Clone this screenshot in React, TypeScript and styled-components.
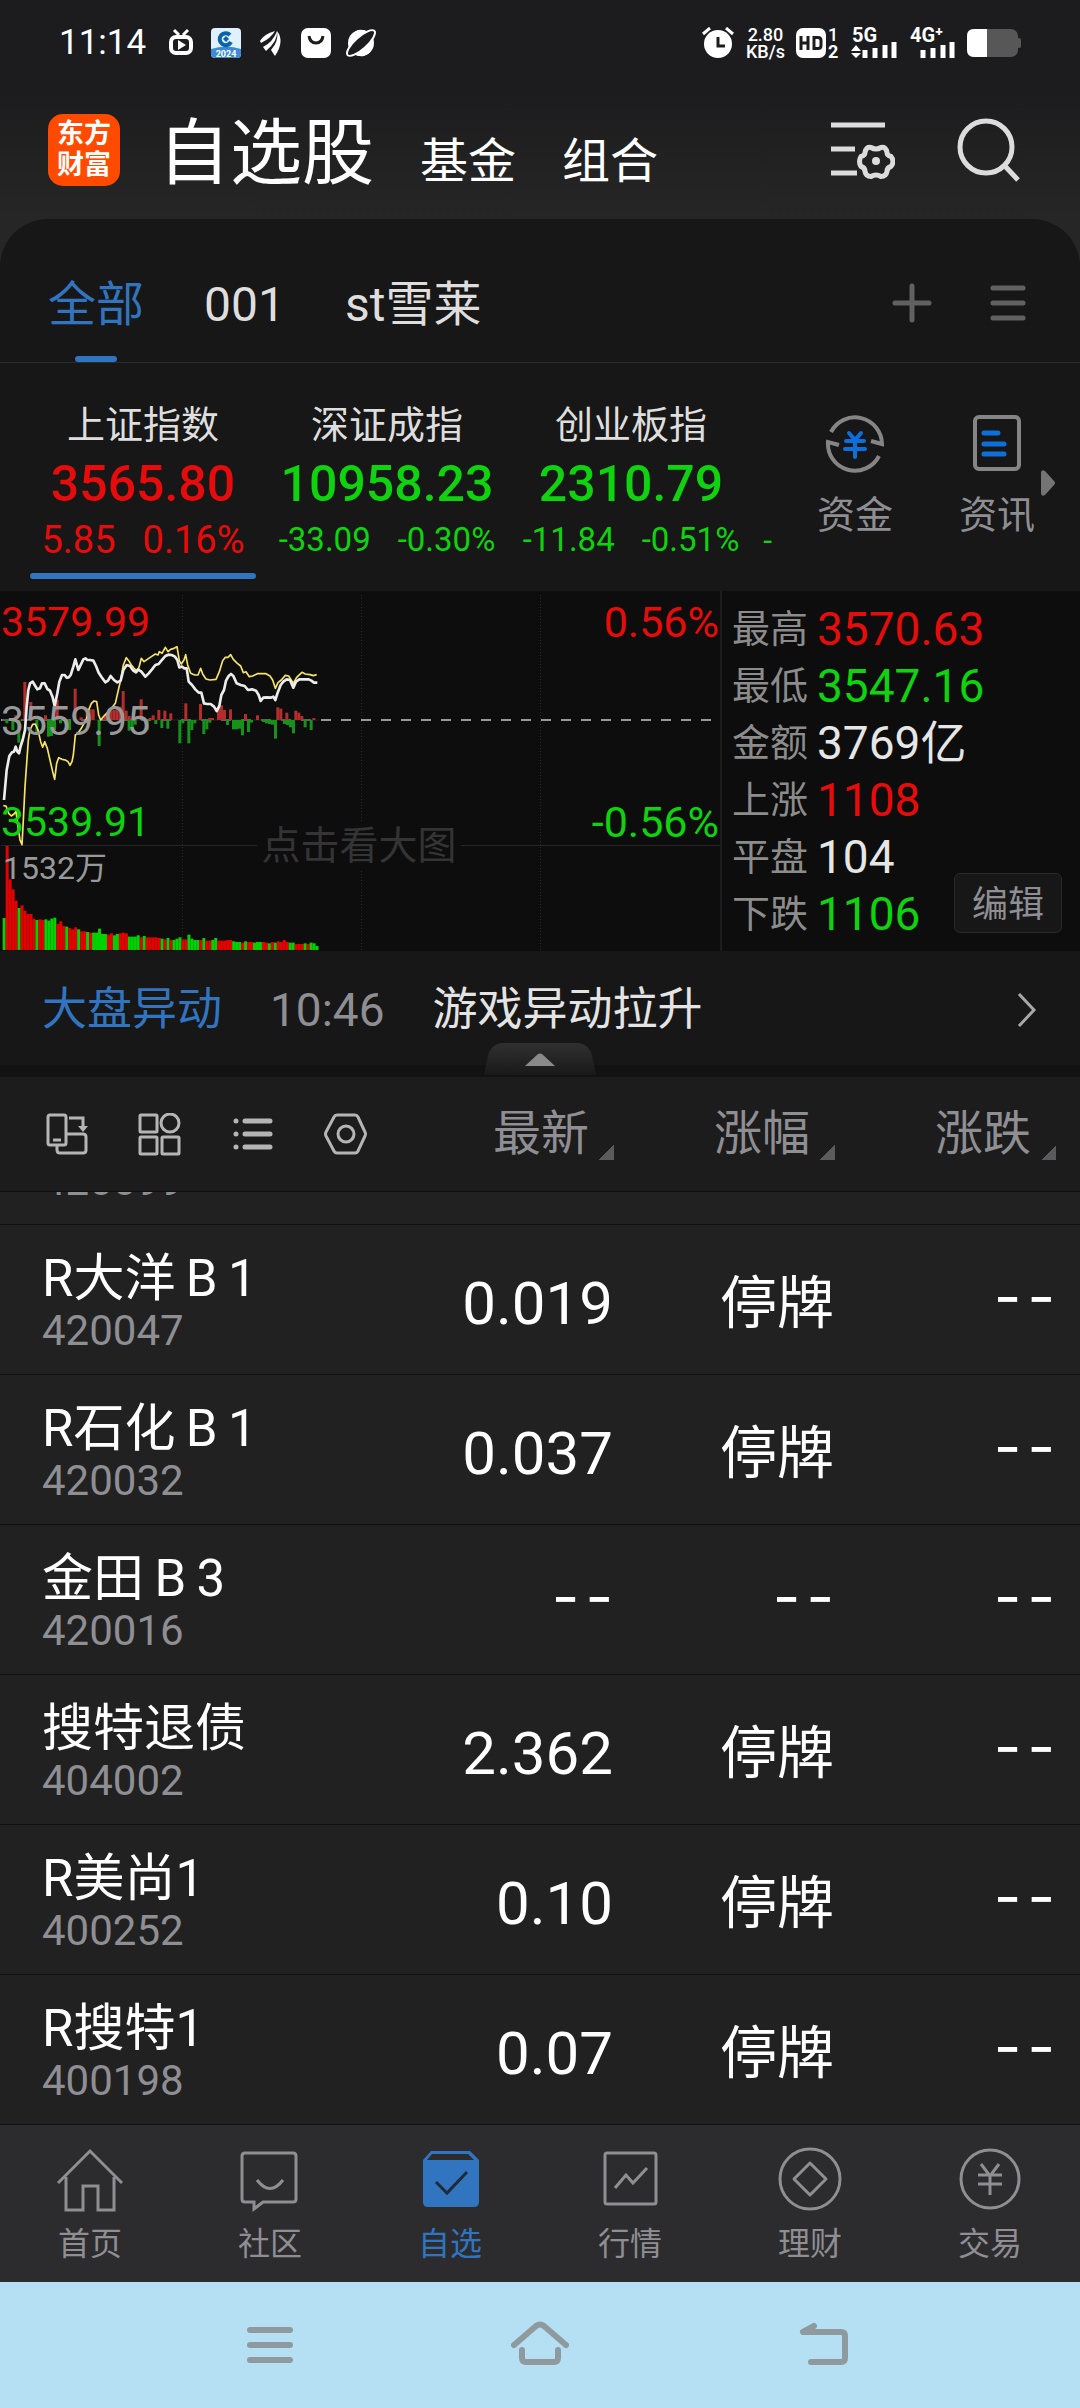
import React from "react";
import styled, { createGlobalStyle } from "styled-components";

const RED = "#e60c0c";
const GREEN = "#0fd30f";
const BLUE = "#3174c0";
const GREY = "#8e8e93";

type Tone = "up" | "down" | "flat";
const toneColor = (tone: Tone) => (tone === "up" ? RED : tone === "down" ? GREEN : "#e6e6e6");

const GlobalStyle = createGlobalStyle`
  * { box-sizing: border-box; }
  body {
    margin: 0;
    background: #212121;
    color: #fff;
    font-family: Roboto, "Noto Sans CJK SC", sans-serif;
    font-weight: 400;
  }
  button {
    margin: 0;
    padding: 0;
    border: 0;
    background: none;
    color: inherit;
    font: inherit;
    white-space: nowrap;
  }
  svg { display: block; flex: none; }
`;

const Screen = styled.div`
  width: 100%;
  overflow: hidden;
`;

/* ---------- status bar and header ---------- */

const Top = styled.header`
  padding-bottom: 48px;
  margin-bottom: -48px;
  background: linear-gradient(#1c1c1e 0, #1c1c1e 88px, #262626 219px);
`;

const StatusBar = styled.div`
  display: flex;
  align-items: center;
  justify-content: space-between;
  height: 86px;
  padding: 0 59px 0 59px;
`;

const StatusGroup = styled.div<{ $gap: number }>`
  display: flex;
  align-items: center;
  gap: ${(p) => p.$gap}px;
`;

const Clock = styled.time`
  width: 96px;
  font-size: 35px;
  line-height: 40px;
`;

const Speed = styled.div`
  font-size: 18px;
  line-height: 17px;
  text-align: center;
  font-weight: 500;
`;

const Header = styled.div`
  display: flex;
  align-items: center;
  height: 133px;
  padding: 0 59px 6px 48px;
`;

const Logo = styled.div`
  display: grid;
  place-content: center;
  width: 72px;
  height: 72px;
  border-radius: 15px;
  background: #ff4a00;
  font-size: 27px;
  line-height: 31px;
  font-weight: 700;
`;

const Sections = styled.nav`
  display: flex;
  align-items: baseline;
  flex: 1;
  gap: 46px;
  margin-left: 38px;
  padding-top: 16px;
`;

const Section = styled.button<{ $main?: boolean }>`
  font-size: ${(p) => (p.$main ? 72 : 48)}px;
  line-height: 84px;
`;

const HeaderActions = styled.div`
  display: flex;
  align-items: center;
  gap: 62px;
`;

/* ---------- market panel ---------- */

const Panel = styled.section`
  border-radius: 48px 48px 0 0;
  background: #171717;
`;

const Groups = styled.div`
  display: flex;
  align-items: stretch;
  height: 144px;
  padding: 0 54px 0 48px;
  border-bottom: 1px solid #2b2b2b;
`;

const GroupTabs = styled.div`
  display: flex;
  flex: 1;
  gap: 60px;
`;

const GroupTab = styled.button<{ $active?: boolean }>`
  position: relative;
  padding-top: 28px;
  color: ${(p) => (p.$active ? BLUE : "#dedede")};
  font-size: 48px;
  line-height: 56px;

  &::after {
    content: "";
    display: ${(p) => (p.$active ? "block" : "none")};
    position: absolute;
    bottom: 0;
    left: 50%;
    width: 42px;
    height: 6px;
    margin-left: -21px;
    border-radius: 3px;
    background: ${BLUE};
  }
`;

const GroupActions = styled.div`
  display: flex;
  align-items: center;
  gap: 58px;
  padding-top: 24px;
`;

const Indices = styled.div`
  display: flex;
  height: 228px;
`;

const IndexStrip = styled.div`
  display: flex;
  flex: 1;
  padding-left: 21px;
  overflow: hidden;
`;

const IndexCard = styled.button<{ $active?: boolean }>`
  display: flex;
  flex-direction: column;
  align-items: center;
  flex: none;
  width: 244px;
  padding-top: 36px;

  &::after {
    content: "";
    width: 226px;
    height: 6px;
    margin-top: 10px;
    border-radius: 3px;
    background: ${(p) => (p.$active ? BLUE : "transparent")};
  }
`;

const IndexName = styled.span`
  color: #dedede;
  font-size: 38px;
  line-height: 52px;
`;

const IndexValue = styled.strong<{ $tone: Tone }>`
  color: ${(p) => toneColor(p.$tone)};
  font-size: 50px;
  line-height: 66px;
  font-weight: 500;
`;

const IndexChange = styled.span<{ $tone: Tone; $large?: boolean }>`
  display: flex;
  align-items: baseline;
  gap: 27px;
  height: 46px;
  color: ${(p) => toneColor(p.$tone)};
  font-size: ${(p) => (p.$large ? 38 : 33)}px;
  line-height: 46px;
`;

const NextIndex = styled.span`
  align-self: flex-start;
  width: 21px;
  padding-top: 154px;
  color: ${GREEN};
  font-size: 32px;
  line-height: 46px;
  text-align: right;
`;

const Shortcuts = styled.div`
  display: flex;
  gap: 66px;
  padding: 50px 0 0 45px;
`;

const Shortcut = styled.button`
  display: flex;
  flex-direction: column;
  align-items: center;
  align-self: flex-start;
  gap: 20px;
  color: ${GREY};
  font-size: 38px;
  line-height: 44px;
`;

const ShortcutMore = styled.div`
  display: flex;
  align-items: center;
  width: 45px;
  padding: 12px 0 0 5px;
`;

/* ---------- chart ---------- */

const ChartArea = styled.div`
  display: grid;
  grid-template-columns: 2fr 1fr;
  background: #0d0d0d;
`;

const Chart = styled.svg`
  width: 100%;
  height: auto;
`;

const Stats = styled.dl`
  position: relative;
  display: flex;
  flex-direction: column;
  margin: 0;
  padding: 9px 0 9px 10px;
  border-left: 2px solid #1c1c1c;
`;

const Stat = styled.div`
  display: flex;
  align-items: center;
  gap: 9px;
  height: 57px;
`;

const StatLabel = styled.dt`
  color: #8c8c8c;
  font-size: 38px;
  line-height: 56px;
`;

const StatValue = styled.dd<{ $tone: Tone }>`
  margin: 0;
  color: ${(p) => toneColor(p.$tone)};
  font-size: 46px;
  line-height: 56px;
`;

const EditButton = styled.button`
  position: absolute;
  right: 18px;
  bottom: 18px;
  width: 108px;
  height: 60px;
  padding-top: 4px;
  border: 1px solid #2a2a2a;
  border-radius: 6px;
  background: #171717;
  color: ${GREY};
  font-size: 36px;
  line-height: 54px;
`;

/* ---------- news ---------- */

const News = styled.a`
  position: relative;
  display: flex;
  align-items: center;
  height: 126px;
  padding: 3px 43px 0 42px;
  border-bottom: 12px solid #121212;
  color: #e4e4e4;
  font-size: 45px;
  line-height: 56px;
  text-decoration: none;
`;

const NewsTag = styled.span`
  color: ${BLUE};
`;

const NewsTime = styled.time`
  margin: 0 48px;
  color: ${GREY};
  font-size: 46px;
`;

const NewsTitle = styled.span`
  flex: 1;
`;

const Handle = styled.span`
  position: absolute;
  left: 50%;
  bottom: -10px;
  margin-left: -56px;
`;

/* ---------- table ---------- */

const Table = styled.table`
  width: 100%;
  border-spacing: 0;
  table-layout: fixed;
  background: #212121;
`;

const Head = styled.th<{ $wide?: boolean }>`
  width: ${(p) => (p.$wide ? "auto" : "221px")};
  height: 115px;
  padding: 0;
  border-bottom: 1px solid #0e0e0e;
  background: #1c1c1c;
  font-weight: 400;
`;

const Tools = styled.div`
  display: flex;
  align-items: center;
  gap: 49px;
  padding-left: 45px;
`;

const HeadValue = styled.div`
  display: flex;
  padding-right: 24px;
`;

const SortButton = styled.button`
  display: flex;
  align-items: flex-end;
  gap: 10px;
  margin-left: auto;
  color: ${GREY};
  font-size: 48px;
  line-height: 56px;
`;

const SortMark = styled.span`
  width: 15px;
  height: 15px;
  margin-bottom: 2px;
  background: linear-gradient(135deg, transparent 50%, #5b5b5d 50%);
`;

const Cell = styled.td`
  padding: 0;
  border-bottom: 1px solid #0f0f0f;
  text-align: right;
`;

const ClippedRow = styled.div`
  display: flex;
  align-items: flex-end;
  height: 32px;
  overflow: hidden;
`;

const Stock = styled.div`
  display: flex;
  flex-direction: column;
  justify-content: flex-end;
  height: 149px;
  padding: 0 0 18px 42px;
  text-align: left;
`;

const StockName = styled.span`
  font-size: 51px;
  line-height: 54px;
`;

const StockCode = styled.span`
  color: ${GREY};
  font-size: 42px;
  line-height: 50px;
`;

const Value = styled.div`
  display: flex;
  align-items: center;
  justify-content: flex-end;
  height: 149px;
  padding: 8px 25px 0 0;
`;

const Price = styled.span`
  font-size: 60px;
  line-height: 72px;
`;

const Halted = styled.span`
  font-size: 57px;
  line-height: 72px;
`;

const Dashes = styled.span`
  display: flex;
  gap: 6px;
  padding-bottom: 16px;
  font-family: Inter, Roboto, sans-serif;
  font-size: 60px;
  line-height: 72px;
`;

/* ---------- bottom bars ---------- */

const TabBar = styled.nav`
  display: grid;
  grid-template-columns: repeat(6, 1fr);
  height: 157px;
  background: #2c2c2e;
`;

const TabItem = styled.button<{ $active?: boolean }>`
  display: flex;
  flex-direction: column;
  align-items: center;
  gap: 11px;
  padding-top: 20px;
  color: ${(p) => (p.$active ? BLUE : GREY)};
  font-size: 32px;
  line-height: 40px;
`;

const SystemBar = styled.nav`
  display: grid;
  grid-template-columns: repeat(3, 1fr);
  height: 126px;
  padding: 0 12.5%;
  background: #b5dff3;
  color: #8f9a9f;
`;

const SystemButton = styled.button`
  display: grid;
  place-items: center;
`;

/* ---------- chart data ---------- */

const PRICE_LINE =
  "12,480 20,390 28,348 36,337 42,335 47,320 52,335 57,340 62,318 68,300 75,270 80,200 85,150 90,130 98,125 104,135 112,148 120,145 126,130 134,130 142,147 150,152 158,172 164,198 172,160 178,125 186,105 194,105 200,113 206,112 212,105 220,80 226,58 235,90 242,75 250,58 256,55 262,60 270,60 280,62 288,78 296,98 305,112 316,127 324,122 332,108 342,120 352,127 362,122 370,90 380,75 390,78 400,92 408,97 414,88 424,95 436,110 446,100 456,88 466,75 476,72 484,62 490,55 496,48 505,44 515,45 525,50 532,60 538,82 546,80 553,85 560,85 566,125 576,135 586,148 596,158 604,158 612,190 622,192 632,192 642,200 650,213 658,198 664,165 672,150 678,122 686,108 693,102 700,108 710,130 722,135 734,138 744,150 756,148 768,152 776,165 782,183 790,173 800,172 812,173 820,170 826,180 833,158 842,135 850,125 860,118 870,120 880,143 888,125 898,118 912,118 926,118 934,122 942,128 952,128";

const AVERAGE_LINE =
  "10,497 18,498 26,520 34,528 42,522 48,515 54,560 60,600 66,614 70,540 75,440 80,370 85,300 90,270 98,253 106,252 114,270 122,305 128,322 134,305 142,325 150,360 158,395 164,418 170,370 176,353 186,358 196,360 204,365 210,376 216,365 220,345 226,285 234,280 244,265 252,250 260,235 266,210 274,190 282,183 290,185 296,225 302,240 312,228 322,218 330,210 338,200 346,190 354,155 362,120 370,75 379,53 386,62 394,75 402,85 412,95 418,78 424,55 432,65 442,58 454,50 466,42 474,45 478,35 486,40 496,22 504,35 512,28 522,25 531,20 538,62 544,72 552,60 557,44 563,75 572,100 584,105 594,105 602,85 608,102 618,117 630,120 648,118 658,95 668,62 676,52 684,52 692,44 700,58 712,70 722,78 730,98 738,95 748,110 758,108 772,101 798,101 810,108 818,120 826,145 834,128 844,120 856,106 866,108 880,130 890,112 906,97 916,102 930,104 940,107 950,104";

const MOMENTUM_UP: [number, number][] = [
  [48, 14], [75, 114], [93, 54], [137, 14], [172, 60], [226, 94], [244, 8], [262, 32], [271, 32], [280, 32], [316, 16],
  [325, 14], [334, 28], [343, 30], [352, 36], [361, 40], [370, 87], [379, 28], [388, 12], [424, 62], [451, 6],
  [460, 14], [477, 30], [495, 28], [513, 20], [558, 50], [602, 48], [629, 6], [638, 6], [656, 38], [665, 44],
  [674, 30], [692, 32], [737, 18], [773, 14], [834, 38], [843, 34], [861, 22], [888, 28], [897, 22], [906, 12],
  [942, 6],
];

const MOMENTUM_DOWN: [number, number][] = [
  [21, 10], [39, 30], [57, 68], [111, 40], [146, 50], [155, 48], [164, 30], [182, 10], [200, 30], [209, 30],
  [298, 78], [388, 32], [397, 28], [406, 14], [442, 30], [468, 12], [486, 24], [504, 26], [540, 70], [549, 10],
  [567, 70], [576, 30], [585, 10], [612, 42], [621, 28], [630, 8], [683, 15], [701, 28], [710, 28], [719, 26],
  [728, 46], [746, 36], [755, 8], [791, 6], [800, 10], [809, 12], [818, 14], [827, 56], [854, 12], [863, 15],
  [872, 22], [881, 40], [916, 22], [934, 30],
];

const VOLUME_SIDES =
  "g rrrr g rrrrr g rr gggg rrr g rrr g rr g r ggggg rr gg rrr gggg r g rrrrr g r g r ggg rr gggg r g r r gg rrrrr ggg r g rr ggg rr g r g rrrr gg rrr g r ggg".replace(/ /g, "");

const VOLUMES = [
  96, 312, 212, 182, 148, 126, 134, 118, 108, 108, 94, 90, 92, 90, 92, 88, 94, 97, 78, 86, 72, 70, 66, 62, 68, 62, 56,
  56, 54, 52, 52, 52, 64, 48, 48, 46, 50, 44, 48, 50, 52, 50, 40, 40, 40, 44, 38, 42, 38, 38, 38, 38, 36, 34, 32, 36,
  30, 30, 34, 38, 32, 32, 46, 34, 30, 30, 30, 36, 28, 28, 30, 36, 28, 28, 28, 30, 30, 26, 24, 24, 22, 26, 24, 24, 22,
  24, 24, 24, 22, 20, 24, 22, 26, 24, 30, 24, 22, 22, 18, 18, 18, 20, 18, 22, 20, 12,
];

function IntradayChart() {
  return (
    <Chart viewBox="0 0 720 360" role="img" aria-label="上证指数分时图">
      <g stroke="#2a2a2a" strokeDasharray="1 2">
        <path d="M182.500 4V360M361.500 4V360M540.500 4V360" />
      </g>
      <path d="M1 254.500H720" stroke="#262626" />
      <path d="M1 129H720" stroke="#999" strokeWidth="2" strokeDasharray="10 10" />
      <g transform="translate(0 49) scale(0.33333)">
        <path d="M6 240H956" stroke="#3a2020" strokeWidth="3" />
        {MOMENTUM_UP.map(([x, h]) => (
          <rect key={x} x={x - 5} y={240 - h} width="9" height={h} fill="#b32d2d" />
        ))}
        {MOMENTUM_DOWN.map(([x, h]) => (
          <rect key={x} x={x - 5} y={240} width="9" height={h} fill="#16911a" />
        ))}
        {VOLUMES.map((h, i) => (
          <rect key={i} x={8 + i * 8.94} y={930 - h} width="9" height={h} fill={VOLUME_SIDES[i] === "r" ? "#e60000" : "#00d300"} />
        ))}
        <polyline points={AVERAGE_LINE} fill="none" stroke="#f7e463" strokeWidth="5" strokeLinejoin="round" />
        <polyline points={PRICE_LINE} fill="none" stroke="#ececec" strokeWidth="8" strokeLinejoin="round" />
      </g>
      <rect x="257" y="232" width="204" height="46" fill="#0d0d0d" />
      <g fontSize="41">
        <text x="1" y="45" fill={RED}>3579.99</text>
        <text x="1" y="144" fill="#999">3559.95</text>
        <text x="1" y="245" fill={GREEN}>3539.91</text>
      </g>
      <g fontSize="43" textAnchor="end">
        <text x="719" y="46" fill={RED}>0.56%</text>
        <text x="719" y="246" fill={GREEN}>-0.56%</text>
      </g>
      <text x="3" y="288" fill="#999" fontSize="32">1532万</text>
      <text x="359" y="268" fill="#343434" fontSize="39" textAnchor="middle">点击看大图</text>
    </Chart>
  );
}

/* ---------- icons ---------- */

const StatusIcons = () => (
  <svg width="208" height="40" viewBox="0 -4 208 40" fill="none" aria-hidden="true">
    <rect x="2" y="10" width="20" height="16" rx="5" stroke="#fff" strokeWidth="4" />
    <path d="M5 3l5 5M19 3l-5 5" stroke="#fff" strokeWidth="3" />
    <path d="M9 13l8 5-8 5z" fill="#fff" />
    <rect x="42" y="1" width="30" height="30" rx="4" fill="#dff1fd" />
    <path d="M42 22q15-5 30 0v5q0 4-4 4H46q-4 0-4-4z" fill="#3f8ad8" />
    <path d="M61 8a6 6 0 1 0 1 7" stroke="#0b62ad" strokeWidth="4" />
    <path d="M57 9l3 3-3 3-3-3z" fill="#0b62ad" />
    <text x="57" y="30" fill="#fff" fontSize="9" fontWeight="700" textAnchor="middle">2024</text>
    <path d="M91 14q4-7 15-10-4 7-14 12zM94 20q10-5 14-16 1 10-11 20zM102 23q8-9 6-19 8 10-2 25z" fill="#fff" />
    <rect x="132" y="1" width="30" height="30" rx="7" fill="#fff" />
    <path d="M140 9q1 7 7 7t7-7" stroke="#1c1c1e" strokeWidth="3" />
    <circle cx="192" cy="16" r="13" fill="#fff" />
    <ellipse cx="192" cy="16" rx="18" ry="6" transform="rotate(-42 192 16)" fill="#1c1c1e" stroke="#fff" strokeWidth="2" />
    <path d="M180 15q1-9 9-12 6-1 10 2-9 1-19 10zM204 17q-1 9-9 12-6 1-10-2 9-1 19-10z" fill="#fff" />
  </svg>
);

const AlarmIcon = () => (
  <svg width="34" height="32" viewBox="0 0 34 32" fill="none" aria-hidden="true">
    <circle cx="17" cy="17" r="14" fill="#fff" />
    <path d="M2 7l7-6M32 7l-7-6" stroke="#fff" strokeWidth="3" />
    <path d="M17 10v9h7" stroke="#1c1c1e" strokeWidth="3" />
  </svg>
);

const HdIcon = () => (
  <svg width="44" height="44" viewBox="0 -6 44 44" fill="none" aria-hidden="true">
    <rect x="0" y="1" width="30" height="30" rx="7" fill="#fff" />
    <path d="M5 9v14M12 9v14M5 16h7M18 10.500h4q3 0 3 3v5q0 3-3 3h-4z" stroke="#1c1c1e" strokeWidth="3" />
    <text x="32" y="14" fill="#fff" fontSize="18" fontWeight="500">1</text>
    <text x="32" y="31" fill="#fff" fontSize="18" fontWeight="700">2</text>
  </svg>
);

const SignalIcon = ({ label, arrows }: { label: string; arrows?: boolean }) => (
  <svg width="47" height="48" viewBox="0 -8 47 48" aria-hidden="true">
    <text x="1" y="15" fill="#fff" fontSize="20" fontWeight="700">{label}</text>
    {arrows && <path d="M0 24l5-6 5 6zM0 26l5 5 5-5z" fill="#fff" />}
    <path d="M14 31v-8M24 31v-10M34 31v-13M43 31v-16" stroke="#fff" strokeWidth="5" />
  </svg>
);

const BatteryIcon = () => (
  <svg width="54" height="28" viewBox="0 0 54 28" aria-hidden="true">
    <rect x="0" y="0" width="51" height="28" rx="7" fill="#575757" />
    <rect x="50" y="9" width="4" height="10" rx="2" fill="#575757" />
    <path d="M7 0h13v28H7q-7 0-7-7V7q0-7 7-7z" fill="#fff" />
  </svg>
);

const ListSettingsIcon = () => (
  <svg width="64" height="60" viewBox="0 0 64 60" fill="none" stroke="#dcdcdc" aria-hidden="true">
    <path d="M0 5h54M0 29h24M0 53h26" strokeWidth="5" />
    <path
      d="M40 27.500q5 3 10 0 5-1 6 5 0 3 4 4 4 5 0 10-4 1-4 5-1 5-6 5-5-3-10 0-5 0-6-5 0-4-4-5-3-5 0-10 4-1 4-4 1-6 6-5z"
      strokeWidth="5"
      strokeLinejoin="round"
    />
    <circle cx="45" cy="41" r="4" fill="#dcdcdc" stroke="none" />
  </svg>
);

const SearchIcon = () => (
  <svg width="64" height="66" viewBox="0 0 64 66" fill="none" stroke="#dcdcdc" strokeWidth="5" aria-hidden="true">
    <circle cx="29" cy="30" r="26" />
    <path d="M47 48l14 15" />
  </svg>
);

const PlusIcon = () => (
  <svg width="40" height="40" viewBox="0 0 40 40" stroke="#616161" strokeWidth="5" strokeLinecap="round" aria-hidden="true">
    <path d="M20 3v34M3 20h34" />
  </svg>
);

const MenuIcon = () => (
  <svg width="36" height="38" viewBox="0 0 36 38" stroke="#616161" strokeWidth="5" strokeLinecap="round" aria-hidden="true">
    <path d="M3 4h30M3 19h30M3 34h30" />
  </svg>
);

const FundsIcon = () => (
  <svg width="60" height="60" viewBox="0 0 60 60" fill="none" stroke="#858585" strokeWidth="4" aria-hidden="true">
    <path d="M6 19A27 27 0 0 1 57 31L46 28M54 43A27 27 0 0 1 3 29L14 32" />
    <path d="M24 20l6 7 6-7M21 28h18M20 36h20M30 28v16" stroke="#0d6fdc" strokeLinecap="round" />
  </svg>
);

const ArticleIcon = () => (
  <svg width="60" height="60" viewBox="0 0 60 60" fill="none" stroke="#858585" strokeWidth="4" aria-hidden="true">
    <rect x="8" y="4" width="44" height="52" rx="4" />
    <path d="M17 20h14M17 31h20M17 41h20" stroke="#0d6fdc" strokeWidth="5" strokeLinecap="round" />
  </svg>
);

const toolIcons: [string, React.ReactNode][] = [
  [
    "横屏",
    <>
      <rect x="3" y="2" width="18" height="30" rx="2" />
      <path d="M8 27h8M24 5h14v10M22 21h16q3 0 3 3v13q0 3-3 3H15q-3 0-3-3v-4" />
      <path d="M33 13h10l-5 6z" fill="#b5b5b5" stroke="none" />
    </>,
  ],
  [
    "宫格",
    <>
      <rect x="2" y="2" width="17" height="17" rx="1" />
      <circle cx="32" cy="10" r="9" />
      <rect x="2" y="24" width="17" height="17" rx="1" />
      <rect x="24" y="24" width="17" height="17" rx="1" />
    </>,
  ],
  ["列表", <path d="M5 8h0M5 21h0M5 34h0M14 8h25M14 21h25M14 34h25" strokeWidth="5" strokeLinecap="round" />],
  [
    "设置",
    <>
      <path d="M13 2h18q2 0 3 2l7 15q1 2 0 4l-7 15q-1 2-3 2H13q-2 0-3-2L2 23q-1-2 0-4l8-15q1-2 3-2z" />
      <circle cx="22" cy="21" r="8" />
    </>,
  ],
];

const ToolIcon = ({ children }: { children: React.ReactNode }) => (
  <svg width="44" height="43" viewBox="0 0 44 43" fill="none" stroke="#b5b5b5" strokeWidth="3" aria-hidden="true">
    {children}
  </svg>
);

const tabs: { label: string; active?: boolean; icon: React.ReactNode }[] = [
  {
    label: "首页",
    icon: <path d="M1 38L33 6l32 32M9 32v33h17V41h15v24h16V32" />,
  },
  {
    label: "社区",
    icon: (
      <>
        <path d="M8 8h48q3 0 3 3v43q0 3-3 3H26l-9 7v-7H8q-3 0-3-3V11q0-3 3-3z" />
        <path d="M20 35q13 17 26 0" />
      </>
    ),
  },
  {
    label: "自选",
    active: true,
    icon: (
      <>
        <path d="M14 6h39l9 9v42q0 5-5 5H11q-5 0-5-5V15z" fill={BLUE} stroke="none" />
        <path d="M15 9h36l6 6H10z" fill="#2c2c2e" stroke="none" />
        <path d="M19 37l11 11 20-21" stroke="#202a38" />
      </>
    ),
  },
  {
    label: "行情",
    icon: (
      <>
        <rect x="8" y="8" width="51" height="51" rx="2" />
        <path d="M18 43l11-13 7 8 14-15" />
      </>
    ),
  },
  {
    label: "理财",
    icon: (
      <>
        <circle cx="33" cy="34" r="30" />
        <path d="M33 18l16 16-16 16-16-16z" strokeLinejoin="round" />
      </>
    ),
  },
  {
    label: "交易",
    icon: (
      <>
        <circle cx="33" cy="34" r="29" />
        <path d="M24 19l9 12 9-12M21 30h24M21 39h24M33 30v20" />
      </>
    ),
  },
];

/* ---------- content ---------- */

const indices: { name: string; value: string; change: string[]; tone: Tone; active?: boolean }[] = [
  { name: "上证指数", value: "3565.80", change: ["5.85", "0.16%"], tone: "up", active: true },
  { name: "深证成指", value: "10958.23", change: ["-33.09", "-0.30%"], tone: "down" },
  { name: "创业板指", value: "2310.79", change: ["-11.84", "-0.51%"], tone: "down" },
];

const stats: [string, string, Tone][] = [
  ["最高", "3570.63", "up"],
  ["最低", "3547.16", "down"],
  ["金额", "3769亿", "flat"],
  ["上涨", "1108", "up"],
  ["平盘", "104", "flat"],
  ["下跌", "1106", "down"],
];

const stocks: [string, string, string, string, string][] = [
  ["R大洋\u2009B\u20091", "420047", "0.019", "停牌", "--"],
  ["R石化\u2009B\u20091", "420032", "0.037", "停牌", "--"],
  ["金田\u2009B\u20093", "420016", "--", "--", "--"],
  ["搜特退债", "404002", "2.362", "停牌", "--"],
  ["R美尚1", "400252", "0.10", "停牌", "--"],
  ["R搜特1", "400198", "0.07", "停牌", "--"],
];

function QuoteText({ text }: { text: string }) {
  if (text === "--") {
    return (
      <Dashes>
        <span>-</span>
        <span>-</span>
      </Dashes>
    );
  }
  return text === "停牌" ? <Halted>{text}</Halted> : <Price>{text}</Price>;
}

export default function App() {
  return (
    <Screen>
      <GlobalStyle />
      <Top>
        <StatusBar>
          <StatusGroup $gap={14}>
            <Clock>11:14</Clock>
            <StatusIcons />
          </StatusGroup>
          <StatusGroup $gap={11}>
            <AlarmIcon />
            <Speed>
              2.80
              <br />
              KB/s
            </Speed>
            <HdIcon />
            <SignalIcon label="5G" arrows />
            <SignalIcon label="4G⁺" />
            <BatteryIcon />
          </StatusGroup>
        </StatusBar>
        <Header>
          <Logo>
            <span>东方</span>
            <span>财富</span>
          </Logo>
          <Sections>
            <Section $main>自选股</Section>
            <Section>基金</Section>
            <Section>组合</Section>
          </Sections>
          <HeaderActions>
            <button aria-label="列表设置"><ListSettingsIcon /></button>
            <button aria-label="搜索"><SearchIcon /></button>
          </HeaderActions>
        </Header>
      </Top>

      <Panel>
        <Groups>
          <GroupTabs>
            <GroupTab $active>全部</GroupTab>
            <GroupTab>001</GroupTab>
            <GroupTab>st雪莱</GroupTab>
          </GroupTabs>
          <GroupActions>
            <button aria-label="添加"><PlusIcon /></button>
            <button aria-label="分组管理"><MenuIcon /></button>
          </GroupActions>
        </Groups>

        <Indices>
          <IndexStrip>
            {indices.map((item) => (
              <IndexCard key={item.name} $active={item.active}>
                <IndexName>{item.name}</IndexName>
                <IndexValue $tone={item.tone}>{item.value}</IndexValue>
                <IndexChange $tone={item.tone} $large={item.active}>
                  {item.change.map((part) => (
                    <span key={part}>{part}</span>
                  ))}
                </IndexChange>
              </IndexCard>
            ))}
            <NextIndex>-</NextIndex>
          </IndexStrip>
          <Shortcuts>
            <Shortcut><FundsIcon />资金</Shortcut>
            <Shortcut><ArticleIcon />资讯</Shortcut>
          </Shortcuts>
          <ShortcutMore>
            <svg width="16" height="26" viewBox="0 0 16 26" fill="#747474" aria-hidden="true">
              <path d="M1 3q0-4 4-2l9 10q2 2 0 4l-9 10q-4 2-4-2z" />
            </svg>
          </ShortcutMore>
        </Indices>

        <ChartArea>
          <IntradayChart />
          <Stats>
            {stats.map(([label, value, tone]) => (
              <Stat key={label}>
                <StatLabel>{label}</StatLabel>
                <StatValue $tone={tone}>{value}</StatValue>
              </Stat>
            ))}
            <EditButton>编辑</EditButton>
          </Stats>
        </ChartArea>

        <News href="#news">
          <NewsTag>大盘异动</NewsTag>
          <NewsTime>10:46</NewsTime>
          <NewsTitle>游戏异动拉升</NewsTitle>
          <svg width="20" height="36" viewBox="0 0 20 36" fill="none" stroke="#a8a8a8" strokeWidth="3" aria-hidden="true">
            <path d="M2 2l15 16L2 34" />
          </svg>
          <Handle>
            <svg width="112" height="32" viewBox="0 0 112 32" aria-hidden="true">
              <defs>
                <linearGradient id="handle" x1="0" y1="0" x2="0" y2="1">
                  <stop offset="0" stopColor="#303030" />
                  <stop offset="1" stopColor="#191919" />
                </linearGradient>
              </defs>
              <path d="M0 32l4-20Q8 0 20 0h72q12 0 16 12l4 20z" fill="url(#handle)" />
              <path d="M41 23l13-12q2-1 4 0l13 12z" fill="#8a8a8a" />
            </svg>
          </Handle>
        </News>
      </Panel>

      <Table>
        <thead>
          <tr>
            <Head $wide>
              <Tools>
                {toolIcons.map(([label, icon]) => (
                  <button key={label} aria-label={label}>
                    <ToolIcon>{icon}</ToolIcon>
                  </button>
                ))}
              </Tools>
            </Head>
            {["最新", "涨幅", "涨跌"].map((label) => (
              <Head key={label}>
                <HeadValue>
                  <SortButton>
                    {label}
                    <SortMark />
                  </SortButton>
                </HeadValue>
              </Head>
            ))}
          </tr>
        </thead>
        <tbody>
          <tr>
            <Cell colSpan={4}>
              <ClippedRow>
                <Stock>
                  <StockCode>420099</StockCode>
                </Stock>
              </ClippedRow>
            </Cell>
          </tr>
          {stocks.map(([name, code, ...quotes]) => (
            <tr key={code}>
              <Cell>
                <Stock>
                  <StockName>{name}</StockName>
                  <StockCode>{code}</StockCode>
                </Stock>
              </Cell>
              {quotes.map((text, i) => (
                <Cell key={i}>
                  <Value>
                    <QuoteText text={text} />
                  </Value>
                </Cell>
              ))}
            </tr>
          ))}
        </tbody>
      </Table>

      <TabBar>
        {tabs.map((tab) => (
          <TabItem key={tab.label} $active={tab.active}>
            <svg width="66" height="68" viewBox="0 0 66 68" fill="none" stroke={GREY} strokeWidth="3" aria-hidden="true">
              {tab.icon}
            </svg>
            {tab.label}
          </TabItem>
        ))}
      </TabBar>

      <SystemBar>
        <SystemButton aria-label="最近任务">
          <svg width="46" height="44" viewBox="0 0 46 44" fill="none" stroke="currentColor" strokeWidth="6" strokeLinecap="round">
            <path d="M3 7h40M3 22h40M3 37h40" />
          </svg>
        </SystemButton>
        <SystemButton aria-label="主屏幕">
          <svg width="60" height="48" viewBox="0 0 60 48" fill="none" stroke="currentColor" strokeWidth="6" strokeLinecap="round">
            <path d="M4 24L26 5q4-3 8 0l22 19M12 29v8q0 4 4 4h28q4 0 4-4v-8" />
          </svg>
        </SystemButton>
        <SystemButton aria-label="返回">
          <svg width="78" height="48" viewBox="0 0 78 48" fill="none" stroke="currentColor" strokeWidth="6" strokeLinecap="round" strokeLinejoin="round">
            <path d="M43 5l-11 6h38q4 0 4 4v22q0 4-4 4H40" />
          </svg>
        </SystemButton>
      </SystemBar>
    </Screen>
  );
}
